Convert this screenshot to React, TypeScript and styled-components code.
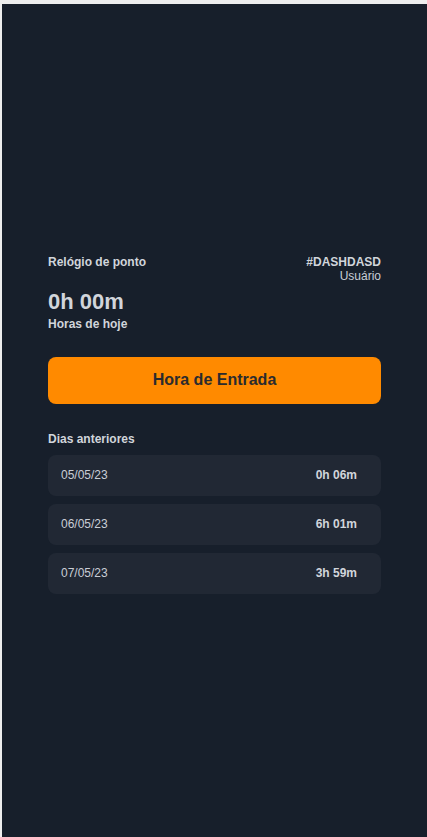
import React from "react";
import styled, { createGlobalStyle } from "styled-components";

const GlobalStyle = createGlobalStyle`
  html, body {
    margin: 0;
    padding: 0;
    background: #eeeeee;
    overflow: hidden;
  }
  body {
    font-family: "Liberation Sans", Arial, sans-serif;
  }
  * { box-sizing: border-box; }
`;

const Screen = styled.div`
  margin: 4px 0 0 2px;
  height: 837px;
  background: #171f2b;
  display: flex;
  flex-direction: column;
  justify-content: center;
  align-items: center;
  padding-top: 3px;
  color: #d1d5db;
`;

const Panel = styled.main`
  width: 333px;
  display: flex;
  flex-direction: column;
`;

const Header = styled.header`
  display: flex;
  justify-content: space-between;
  align-items: flex-start;
`;

const Label = styled.div<{ $align?: "left" | "right" }>`
  font-size: 12px;
  font-weight: 700;
  color: #d1d5db;
  text-align: ${(p) => p.$align ?? "left"};
`;

const UserBox = styled.div`
  display: flex;
  flex-direction: column;
  align-items: flex-end;
`;

const Muted = styled.div`
  font-size: 12px;
  font-weight: 400;
  color: #c9ced6;
`;

const Total = styled.div`
  margin-top: 6px;
  font-size: 22px;
  font-weight: 700;
  color: #d1d5db;
  line-height: 25px;
`;

const SubLabel = styled(Label)`
  margin-top: 3px;
`;

const ActionButton = styled.button`
  margin-top: 26px;
  height: 47px;
  border: none;
  border-radius: 8px;
  background: #ff8a00;
  color: #2b2b2e;
  font-family: "Liberation Sans", Arial, sans-serif;
  font-size: 16px;
  font-weight: 700;
  cursor: pointer;
`;

const SectionTitle = styled(Label)`
  margin-top: 28px;
`;

const List = styled.ul`
  list-style: none;
  margin: 9px 0 0;
  padding: 0;
  display: flex;
  flex-direction: column;
  gap: 8px;
`;

const Row = styled.li`
  height: 41px;
  border-radius: 8px;
  background: #212834;
  display: flex;
  align-items: center;
  justify-content: space-between;
  padding: 0 24px 0 13px;
  font-size: 12px;
`;

const DateText = styled.span`
  color: #c9ced6;
`;

const Duration = styled.span`
  font-weight: 700;
  color: #d1d5db;
`;

const days = [
  { date: "05/05/23", time: "0h 06m" },
  { date: "06/05/23", time: "6h 01m" },
  { date: "07/05/23", time: "3h 59m" },
];

export default function App() {
  return (
    <>
      <GlobalStyle />
      <Screen>
        <Panel>
          <Header>
            <Label>Relógio de ponto</Label>
            <UserBox>
              <Label $align="right">#DASHDASD</Label>
              <Muted>Usuário</Muted>
            </UserBox>
          </Header>
          <Total>0h 00m</Total>
          <SubLabel>Horas de hoje</SubLabel>
          <ActionButton>Hora de Entrada</ActionButton>
          <SectionTitle>Dias anteriores</SectionTitle>
          <List>
            {days.map((d) => (
              <Row key={d.date}>
                <DateText>{d.date}</DateText>
                <Duration>{d.time}</Duration>
              </Row>
            ))}
          </List>
        </Panel>
      </Screen>
    </>
  );
}
